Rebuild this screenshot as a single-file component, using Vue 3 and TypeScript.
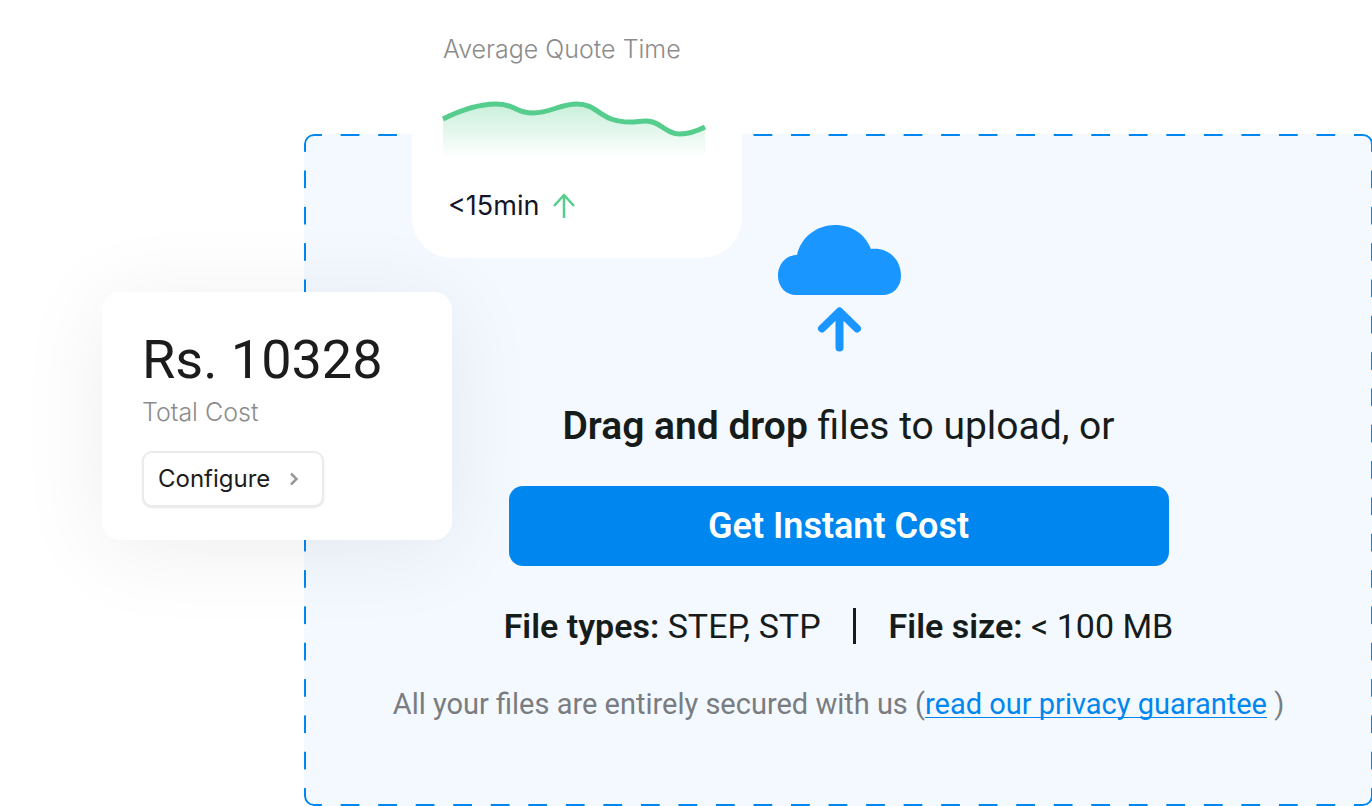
<script setup lang="ts">
interface Fact {
  label: string
  value: string
}

const facts: Fact[] = [
  { label: 'File types:', value: 'STEP, STP' },
  { label: 'File size:', value: '< 100 MB' },
]
const trend = 'M0 21C16 13 34 6 53 6C73 6 72 15 90 15C107 15 117 6 134 6C156 6 156 24 187 24C194 24 197 23 203 23C218 23 222 36 237 36C246 36 254 33 262 29'
</script>

<template>
  <main class="page">
    <section class="drop">
      <svg class="cloud" viewBox="-1 0 124 128" aria-hidden="true">
        <path d="M18 70C8 70 0 62 0 51C0 39 8 30 19 30C23 12 39 0 57 0C74 0 87 9 93 24C110 22 123 34 123 51C123 62 115 70 105 70Z" />
        <path class="shaft" d="M61.5 122.5V87M44 103.5L61.5 86.5L79 103.5" />
      </svg>
      <h1 class="lead"><strong>Drag and drop</strong> files to upload, or</h1>
      <button class="cta" type="button">Get Instant Cost</button>
      <ul class="facts">
        <li v-for="fact in facts" :key="fact.label">
          <strong>{{ fact.label }}</strong> {{ fact.value }}
        </li>
      </ul>
      <p class="note">
        All your files are entirely secured with us (<a href="#privacy">read our privacy guarantee</a> )
      </p>
    </section>

    <section class="cost">
      <p class="price">Rs. 10328</p>
      <p class="caption">Total Cost</p>
      <button class="configure" type="button">
        Configure
        <svg viewBox="0 0 10 16" aria-hidden="true"><path d="M2 2.5L7.5 8L2 13.5" /></svg>
      </button>
    </section>

    <section class="quote">
      <h2 class="caption">Average Quote Time</h2>
      <svg class="chart" viewBox="0 0 262 64" aria-hidden="true">
        <defs>
          <linearGradient id="fade" x1="0" y1="0" x2="0" y2="1">
            <stop offset="0" stop-color="#55cd8c" stop-opacity="0.32" />
            <stop offset="1" stop-color="#55cd8c" stop-opacity="0" />
          </linearGradient>
        </defs>
        <path :d="trend + 'V60H0Z'" fill="url(#fade)" />
        <path class="line" :d="trend" />
      </svg>
      <p class="time">
        &lt;15min
        <svg viewBox="0 0 22 26" aria-hidden="true"><path d="M11 25V2M1 13L11 2L21 13" /></svg>
      </p>
    </section>
  </main>
</template>

<style>
body {
  margin: 0;
  background: #fff;
}
</style>

<style scoped>
.page {
  position: relative;
  padding: 134px 0 0 304px;
  overflow: hidden;
  font-family: Roboto, 'Liberation Sans', sans-serif;
  color: #161c1a;
}

h1,
h2,
p,
ul {
  margin: 0;
  padding: 0;
  font-weight: 400;
}

strong {
  font-weight: 600;
}

.drop {
  position: relative;
  display: flex;
  flex-direction: column;
  align-items: center;
  margin-right: -1px;
  padding: 91px 24px 84px;
  border-radius: 10px;
  background: #f4f8ff;
}

/* Solid outline cut into even dashes, whole periods on every side */
.drop::before {
  content: '';
  position: absolute;
  inset: 0;
  padding: 7px;
  border: 2px solid #0087ef;
  border-radius: 10px;
  pointer-events: none;
  --across: linear-gradient(90deg, #000 25%, transparent 25% 75%, #000 75%);
  --down: linear-gradient(#000 25%, transparent 25% 75%, #000 75%);
  mask-image: var(--across), var(--across), var(--down), var(--down);
  mask-size: 37px 10px, 37px 10px, 10px 36px, 10px 36px;
  mask-position: 0 -9px, 0 calc(100% + 9px), -9px 0, calc(100% + 9px) 0;
  mask-repeat: round no-repeat, round no-repeat, no-repeat round, no-repeat round;
  mask-origin: content-box;
  mask-clip: border-box;
}

.cloud {
  width: 124px;
  height: 128px;
  fill: #1996ff;
}

.shaft {
  fill: none;
  stroke: #1996ff;
  stroke-width: 8;
  stroke-linecap: round;
  stroke-linejoin: round;
}

.lead {
  margin-top: 49px;
  font-size: 39px;
  line-height: 48px;
}

.cta {
  width: min(660px, 100%);
  height: 80px;
  margin-top: 36px;
  border: 0;
  border-radius: 14px;
  background: #0087ef;
  color: #fff;
  font: 600 36px/40px Roboto, 'Liberation Sans', sans-serif;
}

.facts {
  display: flex;
  margin-top: 40px;
  font-size: 34px;
  line-height: 40px;
  list-style: none;
}

.facts li + li {
  position: relative;
  margin-left: 32px;
  padding-left: 36px;
}

.facts li + li::before {
  content: '';
  position: absolute;
  left: 0;
  top: 2px;
  width: 3px;
  height: 36px;
  background: #161c1a;
}

.note {
  margin-top: 40px;
  font-size: 29px;
  line-height: 36px;
  color: #7a7d80;
}

.note a {
  color: #0087ef;
  text-decoration-thickness: 1px;
  text-decoration-skip-ink: none;
  text-underline-offset: 3px;
}

.cost {
  position: absolute;
  left: 102px;
  top: 292px;
  box-sizing: border-box;
  width: 350px;
  padding: 36px 40px 33px;
  border-radius: 18px;
  background: #fff;
  box-shadow: 0 10px 90px rgba(0, 0, 0, 0.07);
}

.price {
  font-size: 54px;
  line-height: 64px;
  color: #1c1c1c;
}

.caption {
  font-family: Inter, 'Liberation Sans', sans-serif;
  font-size: 25px;
  font-weight: 300;
  line-height: 40px;
  color: #8c8c8c;
}

.configure {
  display: flex;
  align-items: center;
  gap: 19px;
  height: 56px;
  margin-top: 19px;
  padding: 0 23px 0 14px;
  border: 2px solid #ebebeb;
  border-radius: 10px;
  background: #fff;
  box-shadow: 0 1px 2px rgba(0, 0, 0, 0.1);
  color: #1c1c1c;
  font: 400 24px/32px Inter, 'Liberation Sans', sans-serif;
}

.configure svg {
  width: 10px;
  height: 16px;
  fill: none;
  stroke: #999;
  stroke-width: 2.5;
}

.quote {
  position: absolute;
  left: 412px;
  top: 0;
  box-sizing: border-box;
  width: 330px;
  padding: 29px 31px 32px;
  border-radius: 0 0 40px 40px;
  background: #fff;
}

.chart {
  display: block;
  width: 262px;
  height: 64px;
  margin-top: 29px;
  overflow: visible;
}

.line {
  fill: none;
  stroke: #55cd8c;
  stroke-width: 5;
}

.time {
  display: flex;
  align-items: center;
  gap: 14px;
  margin: 24px 0 0 5px;
  font-family: Inter, 'Liberation Sans', sans-serif;
  font-size: 27px;
  line-height: 40px;
  color: #15152a;
}

.time svg {
  width: 22px;
  height: 26px;
  fill: none;
  stroke: #55cd8c;
  stroke-width: 2.5;
}
</style>
